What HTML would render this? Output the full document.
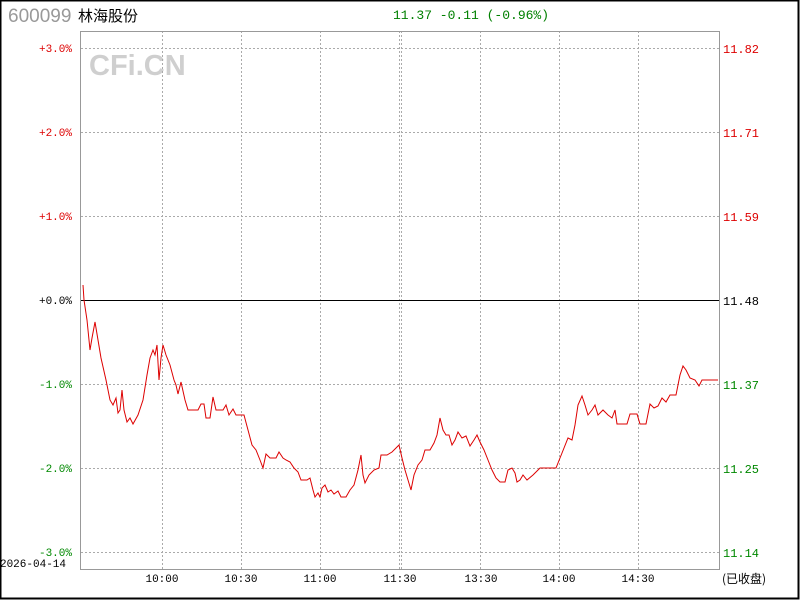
<!DOCTYPE html>
<html><head><meta charset="utf-8"><style>
body{margin:0;background:#fff}
#w{position:relative;width:800px;height:600px;overflow:hidden;font-family:"Liberation Mono","Noto Sans CJK SC",monospace}
</style></head><body><div id="w">
<svg width="800" height="600" style="position:absolute;left:0;top:0" font-family="Liberation Mono, monospace">
<rect x="0.5" y="0.5" width="798" height="598" fill="none" stroke="#000" stroke-width="2"/>
<text x="8" y="22" font-family="Liberation Sans, sans-serif" font-size="19" fill="#999">600099</text>
<text x="78" y="21" font-family="Noto Sans CJK SC, sans-serif" font-size="15" fill="#000">林海股份</text>
<text x="393" y="19" font-size="13" fill="#008000">11.37 -0.11 (-0.96%)</text>
<text x="89" y="75" font-family="Liberation Sans, sans-serif" font-weight="bold" font-size="29" fill="#cfcfcf">CFi.CN</text>
<g stroke="#aaa" stroke-dasharray="2,2" stroke-width="1">
<line x1="81" y1="48.5" x2="720" y2="48.5"/><line x1="81" y1="132.5" x2="720" y2="132.5"/><line x1="81" y1="216.5" x2="720" y2="216.5"/>
<line x1="81" y1="384.5" x2="720" y2="384.5"/><line x1="81" y1="468.5" x2="720" y2="468.5"/><line x1="81" y1="552.5" x2="720" y2="552.5"/>
<line x1="162.5" y1="31" x2="162.5" y2="569"/><line x1="241.5" y1="31" x2="241.5" y2="569"/><line x1="320.5" y1="31" x2="320.5" y2="569"/>
<line x1="399.5" y1="31" x2="399.5" y2="569"/><line x1="401.5" y1="31" x2="401.5" y2="569"/><line x1="480.5" y1="31" x2="480.5" y2="569"/>
<line x1="559.5" y1="31" x2="559.5" y2="569"/><line x1="638.5" y1="31" x2="638.5" y2="569"/>
</g>
<line x1="81" y1="300.5" x2="720" y2="300.5" stroke="#000"/>
<rect x="80.5" y="31.5" width="639" height="538" fill="none" stroke="#999"/>
<polyline fill="none" stroke="#d00" stroke-width="1" points="83,285 84,300 87,320 90,350 92,338 95,322 98,340 101,358 106,380 110,400 113,405 116,398 118,413 120,410 122,390 124,410 127,422 130,418 133,424 138,415 143,400 147,375 150,358 153,350 155,355 157,345 159,380 161,358 163,345 166,355 170,365 174,380 176,385 178,394 181,382 185,400 188,410 198,410 201,404 204,404 206,418 210,418 213,397 216,410 223,410 226,405 229,415 233,409 236,415 244,415 248,430 252,445 256,450 260,460 263,468 266,454 270,458 276,458 279,452 283,458 286,460 290,462 294,468 298,472 301,480 307,480 310,478 313,490 315,497 318,493 320,497 322,488 325,485 328,492 331,490 334,494 338,491 341,497 346,497 350,490 354,485 358,470 361,455 363,475 365,483 369,475 374,470 379,468 381,455 387,455 392,452 396,448 399,445 402,458 405,470 408,480 411,490 414,475 418,465 422,460 425,450 430,450 434,443 437,435 440,418 443,430 446,435 449,435 452,445 455,440 458,432 462,438 466,436 470,446 474,440 477,435 480,442 484,450 488,460 492,470 496,478 500,482 505,482 508,470 512,468 515,473 517,482 520,480 523,475 527,480 533,475 536,472 540,468 556,468 560,458 564,448 568,438 572,440 575,425 578,405 582,396 585,405 588,415 592,410 595,405 598,415 603,410 608,415 612,418 615,410 617,424 627,424 630,414 637,414 640,424 646,424 650,404 654,408 658,406 662,398 666,402 670,395 676,395 680,375 683,366 686,370 690,378 695,380 699,386 702,380 718,380"/>
<g font-size="11" text-anchor="end">
<text x="72" y="52" fill="#d00">+3.0%</text><text x="72" y="136" fill="#d00">+2.0%</text><text x="72" y="220" fill="#d00">+1.0%</text>
<text x="72" y="304" fill="#000">+0.0%</text><text x="72" y="388" fill="#080">-1.0%</text><text x="72" y="472" fill="#080">-2.0%</text><text x="72" y="556" fill="#080">-3.0%</text>
<text x="66" y="567" fill="#000">2026-04-14</text>
</g>
<g font-size="12">
<text x="723" y="53" fill="#d00">11.82</text><text x="723" y="137" fill="#d00">11.71</text><text x="723" y="221" fill="#d00">11.59</text>
<text x="723" y="305" fill="#000">11.48</text><text x="723" y="389" fill="#080">11.37</text><text x="723" y="473" fill="#080">11.25</text><text x="723" y="557" fill="#080">11.14</text>
</g>
<g font-size="11" text-anchor="middle" fill="#000">
<text x="162" y="582">10:00</text><text x="241" y="582">10:30</text><text x="320" y="582">11:00</text><text x="400" y="582">11:30</text>
<text x="481" y="582">13:30</text><text x="559" y="582">14:00</text><text x="638" y="582">14:30</text>
</g>
<text x="722" y="583" font-family="Noto Sans CJK SC, sans-serif" font-size="12" fill="#000">(已收盘)</text>
</svg>
</div></body></html>
